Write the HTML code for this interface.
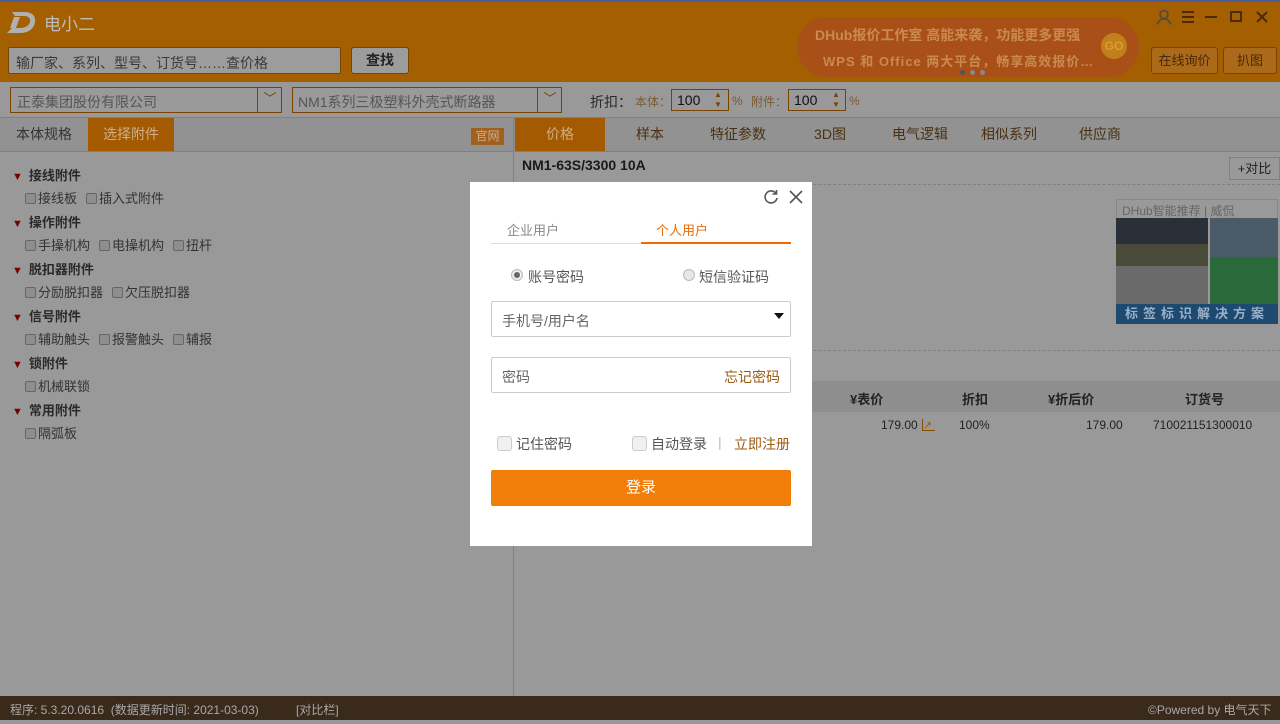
<!DOCTYPE html>
<html><head><meta charset="utf-8"><style>
*{margin:0;padding:0;box-sizing:border-box}
body{width:1280px;height:720px;overflow:hidden;position:relative;background:#999;font-family:"Liberation Sans","Noto Sans CJK SC",sans-serif;font-size:13px;color:#333}
.a{position:absolute}
.top{left:0;top:0;width:1280px;height:82px;background:#a46000;border-top:2px solid #4a5a9a}
.btn{background:#aa6a1a;border:1px solid #7a4400;border-radius:3px;color:#4a2a08;text-align:center;font-size:13px}
.cb{display:inline-block;width:11px;height:11px;border:1px solid #666;border-radius:2px;background:#8e8e8e;vertical-align:-1px;margin-right:2px}
.grp{left:12px;font-weight:bold;color:#2a2a2a}
.grp:before{content:"▼";color:#7a0000;font-size:11px;margin-right:6px}
.itm{left:25px;color:#333}
.itm span{margin-right:9px}
.tab{top:118px;height:33px;line-height:33px;text-align:center;color:#4a3010;font-size:14px}
</style></head><body>
<div class="a top"></div>
<svg class="a" style="left:6px;top:10px" width="32" height="24" viewBox="0 0 32 24"><path d="M6 2h12c8 0 12 4 11 10-1 7-7 11-15 11H1l5-5h8c5 0 9-2 10-6 1-4-2-6-6-6h-9z" fill="#b0b0b0"/><path d="M8 7h6l-4 11H4z" fill="#b0b0b0"/></svg>
<div class="a" style="left:44px;top:10px;font-size:17px;color:#bdbdbd">电小二</div>
<div class="a" style="left:8px;top:47px;width:333px;height:27px;background:#9c9c9c;border:1px solid #7a4400;border-radius:2px;padding:5px 7px;font-size:14px;color:#3a3a3a">输厂家、系列、型号、订货号……查价格</div>
<div class="a btn" style="left:351px;top:47px;width:58px;height:27px;line-height:25px;background:#9c9c9c;color:#222;font-weight:bold;font-size:14px">查找</div>
<div class="a" style="left:797px;top:17px;width:342px;height:60px;border-radius:30px;background:#a85018"></div>
<div class="a" style="left:815px;top:25px;font-size:14px;color:#c98a50;font-weight:bold">DHub报价工作室 高能来袭，功能更多更强</div>
<div class="a" style="left:823px;top:51px;font-size:13px;color:#c98a50;font-weight:bold;letter-spacing:1px">WPS 和 Office 两大平台，畅享高效报价…</div>
<div class="a" style="left:1101px;top:33px;width:26px;height:26px;border-radius:50%;background:#c0801c;color:#e09a30;font-size:12px;font-weight:bold;line-height:26px;text-align:center">GO</div>
<div class="a" style="left:960px;top:70px;width:5px;height:5px;border-radius:50%;background:#555"></div>
<div class="a" style="left:970px;top:70px;width:5px;height:5px;border-radius:50%;background:#888"></div>
<div class="a" style="left:980px;top:70px;width:5px;height:5px;border-radius:50%;background:#888"></div>
<svg class="a" style="left:1156px;top:9px" width="16" height="16" viewBox="0 0 16 16" fill="none" stroke="#4a4a4a" stroke-width="1.6"><circle cx="8" cy="5.5" r="4"/><path d="M1.5 15.5c1-4 3.5-5.5 6.5-5.5s5.5 1.5 6.5 5.5"/></svg>
<svg class="a" style="left:1182px;top:11px" width="12" height="12" stroke="#4a2a08" stroke-width="2"><path d="M0 1h12M0 6h12M0 11h12"/></svg>
<svg class="a" style="left:1205px;top:11px" width="14" height="12" stroke="#4a2a08" stroke-width="2"><path d="M0 6h12"/></svg>
<svg class="a" style="left:1230px;top:11px" width="13" height="12" fill="none" stroke="#4a2a08" stroke-width="2"><rect x="1" y="1" width="10" height="9"/></svg>
<svg class="a" style="left:1256px;top:11px" width="12" height="12" stroke="#4a2a08" stroke-width="2"><path d="M1 1l10 10M11 1l-10 10"/></svg>
<div class="a btn" style="left:1151px;top:47px;width:67px;height:27px;line-height:25px">在线询价</div>
<div class="a btn" style="left:1223px;top:47px;width:54px;height:27px;line-height:25px">扒图</div>
<!-- selectors row -->
<div class="a" style="left:10px;top:87px;width:272px;height:26px;border:1px solid #7a4400;background:#9a9a9a;padding:4px 6px;font-size:14px;color:#555">正泰集团股份有限公司</div>
<div class="a" style="left:257px;top:87px;width:25px;height:26px;border-left:1px solid #7a4400;color:#7a4400;text-align:center;line-height:24px">﹀</div>
<div class="a" style="left:292px;top:87px;width:270px;height:26px;border:1px solid #7a4400;background:#9a9a9a;padding:4px 5px;font-size:14px;color:#555">NM1系列三极塑料外壳式断路器</div>
<div class="a" style="left:537px;top:87px;width:25px;height:26px;border-left:1px solid #7a4400;color:#7a4400;text-align:center;line-height:24px">﹀</div>
<div class="a" style="left:590px;top:92px;font-size:14px;color:#2a2a2a">折扣：</div>
<div class="a" style="left:635px;top:93px;font-size:12px;color:#7a5a30">本体：</div>
<div class="a" style="left:671px;top:89px;width:58px;height:22px;border:1px solid #7a4400;padding:2px 5px;font-size:14px;color:#111">100</div>
<div class="a" style="left:714px;top:90px;font-size:8px;color:#7a4400;line-height:10px">▲<br>▼</div>
<div class="a" style="left:732px;top:94px;font-size:12px;color:#7a5a30">%</div>
<div class="a" style="left:751px;top:93px;font-size:12px;color:#7a5a30">附件：</div>
<div class="a" style="left:788px;top:89px;width:58px;height:22px;border:1px solid #7a4400;padding:2px 5px;font-size:14px;color:#111">100</div>
<div class="a" style="left:832px;top:90px;font-size:8px;color:#7a4400;line-height:10px">▲<br>▼</div>
<div class="a" style="left:849px;top:94px;font-size:12px;color:#7a5a30">%</div>
<!-- tab bars -->
<div class="a" style="left:0;top:117px;width:1280px;height:35px;background:#929292;border-top:1px solid #808080;border-bottom:1px solid #808080"></div>
<div class="a" style="left:513px;top:117px;width:1px;height:580px;background:#808080"></div>
<div class="a tab" style="left:0;width:88px;color:#333">本体规格</div>
<div class="a tab" style="left:88px;width:86px;background:#a45a00;color:#cfae88">选择附件</div>
<div class="a" style="left:471px;top:128px;width:33px;height:17px;background:#a06020;color:#cfae88;font-size:12px;text-align:center;line-height:17px">官网</div>
<div class="a tab" style="left:515px;width:90px;background:#a45a00;color:#cfae88">价格</div>
<div class="a tab" style="left:615px;width:70px">样本</div>
<div class="a tab" style="left:695px;width:86px">特征参数</div>
<div class="a tab" style="left:800px;width:60px">3D图</div>
<div class="a tab" style="left:880px;width:80px">电气逻辑</div>
<div class="a tab" style="left:968px;width:82px">相似系列</div>
<div class="a tab" style="left:1068px;width:64px">供应商</div>
<!-- left list -->
<div class="a grp" style="top:165px">接线附件</div>
<div class="a itm" style="top:188px"><span><i class="cb"></i>接线板</span><span><i class="cb"></i>插入式附件</span></div>
<div class="a grp" style="top:212px">操作附件</div>
<div class="a itm" style="top:235px"><span><i class="cb"></i>手操机构</span><span><i class="cb"></i>电操机构</span><span><i class="cb"></i>扭杆</span></div>
<div class="a grp" style="top:259px">脱扣器附件</div>
<div class="a itm" style="top:282px"><span><i class="cb"></i>分励脱扣器</span><span><i class="cb"></i>欠压脱扣器</span></div>
<div class="a grp" style="top:306px">信号附件</div>
<div class="a itm" style="top:329px"><span><i class="cb"></i>辅助触头</span><span><i class="cb"></i>报警触头</span><span><i class="cb"></i>辅报</span></div>
<div class="a grp" style="top:353px">锁附件</div>
<div class="a itm" style="top:376px"><span><i class="cb"></i>机械联锁</span></div>
<div class="a grp" style="top:400px">常用附件</div>
<div class="a itm" style="top:423px"><span><i class="cb"></i>隔弧板</span></div>
<!-- right content -->
<div class="a" style="left:522px;top:157px;font-size:14px;font-weight:bold;color:#1a1a1a">NM1-63S/3300 10A</div>
<div class="a" style="left:1229px;top:157px;width:51px;height:23px;border:1px solid #808080;text-align:center;line-height:21px;color:#222">+对比</div>
<div class="a" style="left:514px;top:184px;width:766px;border-top:1px dashed #808080"></div>
<div class="a" style="left:1116px;top:199px;width:162px;height:20px;border:1px solid #888;font-size:12px;color:#666;padding:2px 5px">DHub智能推荐 | 威侃</div>
<div class="a" style="left:1116px;top:218px;width:92px;height:87px;background:linear-gradient(#2a3038 0 30%,#4a4a38 30% 55%,#6a6a6a 55%)"></div>
<div class="a" style="left:1210px;top:218px;width:68px;height:87px;background:linear-gradient(#4a5a66 0 45%,#2a6a3a 45%)"></div>
<div class="a" style="left:1116px;top:304px;width:162px;height:20px;background:#1e4a70;color:#9ab0c8;font-size:13px;font-weight:bold;letter-spacing:5px;text-align:center;line-height:20px">标签标识解决方案</div>
<div class="a" style="left:514px;top:350px;width:766px;border-top:1px dashed #808080"></div>
<div class="a" style="left:514px;top:381px;width:766px;height:31px;background:#8e8e8e"></div>
<div class="a" style="left:850px;top:389px;font-weight:bold;color:#222">¥表价</div>
<div class="a" style="left:962px;top:389px;font-weight:bold;color:#222">折扣</div>
<div class="a" style="left:1048px;top:389px;font-weight:bold;color:#222">¥折后价</div>
<div class="a" style="left:1185px;top:389px;font-weight:bold;color:#222">订货号</div>
<div class="a" style="left:881px;top:418px;font-size:12px;color:#222">179.00</div>
<div class="a" style="left:922px;top:419px;width:13px;height:12px;border-left:1px solid #8a4a00;border-bottom:1px solid #8a4a00;color:#8a4a00;font-size:9px">↗</div>
<div class="a" style="left:959px;top:418px;font-size:12px;color:#222">100%</div>
<div class="a" style="left:1086px;top:418px;font-size:12px;color:#222">179.00</div>
<div class="a" style="left:1153px;top:418px;font-size:12px;color:#222">710021151300010</div>
<!-- bottom -->
<div class="a" style="left:0;top:696px;width:1280px;height:24px;background:#3a2a1c;color:#a8a8a8;font-size:12px;line-height:28px">
<span class="a" style="left:10px">程序: 5.3.20.0616 &nbsp;(数据更新时间: 2021-03-03)</span>
<span class="a" style="left:296px">[对比栏]</span>
<span class="a" style="left:1148px">©Powered by 电气天下</span></div>
<!-- dialog -->
<div class="a" style="left:470px;top:182px;width:342px;height:364px;background:#fff"></div>
<svg class="a" style="left:763px;top:189px" width="16" height="16" fill="none" stroke="#555" stroke-width="1.6"><path d="M13 4.5A6 6 0 1 0 14 9"/><path d="M13.5 1v4h-4"/></svg>
<svg class="a" style="left:789px;top:190px" width="14" height="14" stroke="#555" stroke-width="1.6"><path d="M1 1l12 12M13 1L1 13"/></svg>
<div class="a" style="left:507px;top:220px;font-size:13px;color:#888">企业用户</div>
<div class="a" style="left:656px;top:220px;font-size:13px;color:#f06a00">个人用户</div>
<div class="a" style="left:491px;top:243px;width:150px;height:1px;background:#ddd"></div>
<div class="a" style="left:641px;top:242px;width:150px;height:2px;background:#f06a00"></div>
<div class="a" style="left:511px;top:269px;width:12px;height:12px;border-radius:50%;border:1px solid #bbb;background:#eee"></div>
<div class="a" style="left:514px;top:272px;width:6px;height:6px;border-radius:50%;background:#666"></div>
<div class="a" style="left:528px;top:267px;font-size:14px;color:#555">账号密码</div>
<div class="a" style="left:683px;top:269px;width:12px;height:12px;border-radius:50%;border:1px solid #bbb;background:#e6e6e6"></div>
<div class="a" style="left:699px;top:267px;font-size:14px;color:#555">短信验证码</div>
<div class="a" style="left:491px;top:301px;width:300px;height:36px;border:1px solid #ccc;border-radius:2px;padding:9px 10px;font-size:14px;color:#666">手机号/用户名</div>
<div class="a" style="left:774px;top:313px;width:0;height:0;border-left:5px solid transparent;border-right:5px solid transparent;border-top:6px solid #111"></div>
<div class="a" style="left:491px;top:357px;width:300px;height:36px;border:1px solid #ccc;border-radius:2px;padding:9px 10px;font-size:14px;color:#666">密码</div>
<div class="a" style="left:724px;top:367px;font-size:14px;color:#9a5a10">忘记密码</div>
<div class="a" style="left:497px;top:436px;width:15px;height:15px;border:1px solid #ccc;border-radius:3px;background:#f0f0f0"></div>
<div class="a" style="left:516px;top:434px;font-size:14px;color:#555">记住密码</div>
<div class="a" style="left:632px;top:436px;width:15px;height:15px;border:1px solid #ccc;border-radius:3px;background:#f0f0f0"></div>
<div class="a" style="left:651px;top:434px;font-size:14px;color:#555">自动登录</div>
<div class="a" style="left:718px;top:434px;font-size:14px;color:#bbb">|</div>
<div class="a" style="left:734px;top:434px;font-size:14px;color:#9a5a10">立即注册</div>
<div class="a" style="left:491px;top:470px;width:300px;height:36px;background:#f27e0a;border-radius:2px;color:#fff;font-size:15px;text-align:center;line-height:36px">登录</div>
</body></html>
